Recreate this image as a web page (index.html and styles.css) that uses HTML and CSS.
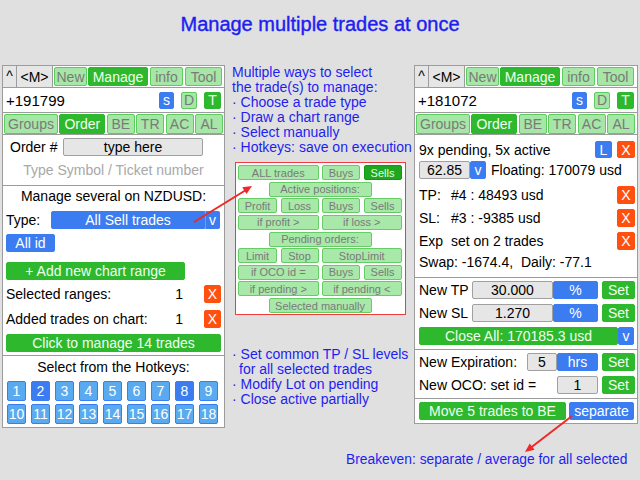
FILE: index.html
```html
<!DOCTYPE html>
<html>
<head>
<meta charset="utf-8">
<title>Manage multiple trades at once</title>
<link rel="stylesheet" href="styles.css">
</head>
<body>
<h1 class="title">Manage multiple trades at once</h1>
<div class="main">
  <div class="panel panel-left">
    <div class="row-a">
      <span class="cell caret">^</span>
      <span class="cell mcell">&lt;M&gt;</span>
      <span class="btn g w33 ml1">New</span>
      <span class="btn G w60 ml1">Manage</span>
      <span class="btn g w33 ml2">info</span>
      <span class="btn g w37 ml2">Tool</span>
    </div>
    <div class="row-b">
      <span class="balance">+191799</span>
      <span class="btn b sm w15 push">s</span>
      <span class="btn g sm w16 ml7">D</span>
      <span class="btn G sm w17 ml7">T</span>
    </div>
    <div class="row-c">
      <span class="btn g tab w54">Groups</span>
      <span class="btn G tab w46">Order</span>
      <span class="btn g tab w28">BE</span>
      <span class="btn g tab w28">TR</span>
      <span class="btn g tab w28">AC</span>
      <span class="btn g tab w28">AL</span>
    </div>
    <div class="sec-order">
      <div class="order-row">
        <span class="order-label">Order #</span>
        <span class="input w140">type here</span>
      </div>
      <div class="hint">Type Symbol / Ticket number</div>
    </div>
    <div class="sec-manage">
      <div class="center-title">Manage several on NZDUSD:</div>
      <div class="type-row">
        <span class="type-label">Type:</span>
        <span class="btn b sel w154">All Sell trades</span>
        <span class="btn b sel-v w15">v</span>
      </div>
      <div class="btn b h18 w49 mt5">All id</div>
      <div class="btn G h18 w179 mt10">+ Add new chart range</div>
      <div class="stat-row mt5">
        <span class="stat-label">Selected ranges:</span>
        <span class="stat-val">1</span>
        <span class="btn x h18 w17">X</span>
      </div>
      <div class="stat-row mt7">
        <span class="stat-label">Added trades on chart:</span>
        <span class="stat-val">1</span>
        <span class="btn x h18 w17">X</span>
      </div>
      <div class="btn G h18 w215 mt6">Click to manage 14 trades</div>
    </div>
    <div class="sec-hot">
      <div class="center-title hot-title">Select from the Hotkeys:</div>
      <div class="hot-grid">
        <span class="hk">1</span><span class="hk on">2</span><span class="hk">3</span>
        <span class="hk">4</span><span class="hk">5</span><span class="hk">6</span>
        <span class="hk">7</span><span class="hk on">8</span><span class="hk">9</span>
        <span class="hk">10</span><span class="hk">11</span><span class="hk">12</span>
        <span class="hk">13</span><span class="hk">14</span><span class="hk">15</span>
        <span class="hk">16</span><span class="hk">17</span><span class="hk">18</span>
      </div>
    </div>
  </div>

  <div class="mid">
    <div class="blue-text">
      <div>Multiple ways to select</div>
      <div>the trade(s) to manage:</div>
      <div>· Choose a trade type</div>
      <div>· Draw a chart range</div>
      <div>· Select manually</div>
      <div>· Hotkeys: save on execution</div>
    </div>
    <div class="sel-box">
      <div class="grid4">
        <span class="mb span2">ALL trades</span>
        <span class="mb">Buys</span>
        <span class="mb mb-on">Sells</span>
      </div>
      <div class="mrow-c"><span class="mb w103">Active positions:</span></div>
      <div class="grid4">
        <span class="mb">Profit</span>
        <span class="mb">Loss</span>
        <span class="mb">Buys</span>
        <span class="mb">Sells</span>
      </div>
      <div class="grid4">
        <span class="mb span2">if profit &gt;</span>
        <span class="mb span2">if loss &gt;</span>
      </div>
      <div class="mrow-c"><span class="mb w103">Pending orders:</span></div>
      <div class="grid4">
        <span class="mb">Limit</span>
        <span class="mb">Stop</span>
        <span class="mb span2">StopLimit</span>
      </div>
      <div class="grid4">
        <span class="mb span2">if OCO id =</span>
        <span class="mb">Buys</span>
        <span class="mb">Sells</span>
      </div>
      <div class="grid4">
        <span class="mb span2">if pending &gt;</span>
        <span class="mb span2">if pending &lt;</span>
      </div>
      <div class="mrow-c"><span class="mb w103">Selected manually</span></div>
    </div>
    <div class="blue-text lower">
      <div>· Set common TP / SL levels</div>
      <div class="indent">for all selected trades</div>
      <div>· Modify Lot on pending</div>
      <div>· Close active partially</div>
    </div>
  </div>

  <div class="panel panel-right">
    <div class="row-a">
      <span class="cell caret">^</span>
      <span class="cell mcell">&lt;M&gt;</span>
      <span class="btn g w33 ml1">New</span>
      <span class="btn G w60 ml1">Manage</span>
      <span class="btn g w33 ml2">info</span>
      <span class="btn g w37 ml2">Tool</span>
    </div>
    <div class="row-b">
      <span class="balance">+181072</span>
      <span class="btn b sm w15 push">s</span>
      <span class="btn g sm w16 ml7">D</span>
      <span class="btn G sm w17 ml7">T</span>
    </div>
    <div class="row-c">
      <span class="btn g tab w54">Groups</span>
      <span class="btn G tab w46">Order</span>
      <span class="btn g tab w28">BE</span>
      <span class="btn g tab w28">TR</span>
      <span class="btn g tab w28">AC</span>
      <span class="btn g tab w28">AL</span>
    </div>
    <div class="sec-info">
      <div class="r-row first">
        <span>9x pending, 5x active</span>
        <span class="btn b h17 w17 push">L</span>
        <span class="btn x h17 w18 ml5">X</span>
      </div>
      <div class="r-row mt3">
        <span class="input h18 w51">62.85</span>
        <span class="btn b h18 w16">v</span>
        <span class="floating">Floating: 170079 usd</span>
      </div>
      <div class="r-row mt7">
        <span class="r-label">TP:</span>
        <span>#4 : 48493 usd</span>
        <span class="btn x h18 w18 push">X</span>
      </div>
      <div class="r-row mt5">
        <span class="r-label">SL:</span>
        <span>#3 : -9385 usd</span>
        <span class="btn x h18 w18 push">X</span>
      </div>
      <div class="r-row mt5">
        <span class="r-label">Exp</span>
        <span>set on 2 trades</span>
        <span class="btn x h18 w18 push">X</span>
      </div>
      <div class="swap">Swap: -1674.4,&nbsp; Daily: -77.1</div>
    </div>
    <div class="sec-levels">
      <div class="r-row mt3">
        <span class="lvl-label">New TP</span>
        <span class="input h18 w81">30.000</span>
        <span class="btn b h18 w45">%</span>
        <span class="btn G h18 w33 ml4">Set</span>
      </div>
      <div class="r-row mt5">
        <span class="lvl-label">New SL</span>
        <span class="input h18 w81">1.270</span>
        <span class="btn b h18 w45">%</span>
        <span class="btn G h18 w33 ml4">Set</span>
      </div>
      <div class="r-row mt5">
        <span class="btn G h18 w199">Close All: 170185.3 usd</span>
        <span class="btn b h18 w16">v</span>
      </div>
    </div>
    <div class="sec-exp">
      <div class="r-row mt3">
        <span class="lvl-label">New Expiration:</span>
        <span class="input h18 w30">5</span>
        <span class="btn b h18 w41">hrs</span>
        <span class="btn G h18 w33 ml4">Set</span>
      </div>
      <div class="r-row mt5">
        <span class="lvl-label">New OCO: set id =</span>
        <span class="input h18 w41">1</span>
        <span class="btn G h18 w33 ml4">Set</span>
      </div>
    </div>
    <div class="sec-be">
      <div class="r-row mt3">
        <span class="btn G h18 w147">Move 5 trades to BE</span>
        <span class="btn b h18 w65 ml3">separate</span>
      </div>
    </div>
  </div>
</div>
<div class="footer">Breakeven: separate / average for all selected</div>

<svg class="arrows" width="640" height="480" viewBox="0 0 640 480">
  <line x1="194" y1="222" x2="246" y2="190" stroke="#f02828" stroke-width="2"/>
  <polygon points="252,186 246.5,194.1 242.2,187.3" fill="#f02828"/>
  <line x1="572" y1="416" x2="531" y2="447.5" stroke="#f02828" stroke-width="2"/>
  <polygon points="525,452 534.6,449.7 529.7,443.4" fill="#f02828"/>
</svg>
</body>
</html>
```
FILE: styles.css
```css
* { box-sizing: border-box; }
html, body { margin: 0; padding: 0; }
body {
  width: 640px;
  height: 480px;
  background: #e0e0e0;
  font-family: "Liberation Sans", Arial, sans-serif;
  font-size: 14px;
  color: #000;
  position: relative;
  overflow: hidden;
}
.title {
  margin: 0;
  height: 65px;
  padding-top: 12px;
  font-size: 20px;
  line-height: 24px;
  font-weight: normal;
  text-align: center;
  color: #1e1ef0;
  -webkit-text-stroke: 0.4px #1e1ef0;
}
.main { display: flex; align-items: flex-start; }

.panel { background: #fff; border: 1px solid #9c9c9c; width: 223px; }
.panel-left { margin-left: 2px; }
.panel-right { width: 224px; }

.row-a {
  display: flex; align-items: center;
  height: 22px; border-bottom: 1px solid #9c9c9c;
}
.cell {
  align-self: stretch;
  background: #e6e6e6;
  border-right: 1px solid #9c9c9c;
  display: flex; align-items: center; justify-content: center;
}
.caret { width: 14px; align-items: flex-start; padding-top: 2px; }
.mcell { width: 36px; }

.btn {
  display: flex; align-items: center; justify-content: center;
  height: 19px;
  border: 1px solid transparent;
  border-radius: 2px;
  white-space: nowrap;
  font-size: 14px;
  flex: none;
}
.g { background: #a6e6a6; border-color: #5ccc5c; color: #7a7a7a; }
.G { background: #2db82d; border-color: #2db82d; color: #f0fff0; }
.b { background: #3b7cf0; border-color: #3b7cf0; color: #fff; }
.x { background: #ff5010; border-color: #ff5010; color: #fff; }

.sm { height: 17px; }
.h17 { height: 17px; }
.h18 { height: 18px; }
.tab { height: 20px; }

.w15 { width: 15px; } .w16 { width: 16px; } .w17 { width: 17px; } .w18 { width: 18px; }
.w28 { width: 28px; } .w30 { width: 30px; } .w33 { width: 33px; } .w37 { width: 37px; }
.w41 { width: 41px; } .w45 { width: 45px; } .w46 { width: 46px; } .w49 { width: 49px; }
.w51 { width: 51px; } .w54 { width: 54px; } .w60 { width: 60px; } .w65 { width: 65px; }
.w81 { width: 81px; } .w140 { width: 140px; } .w147 { width: 147px; } .w154 { width: 154px; }
.w179 { width: 179px; } .w199 { width: 199px; } .w215 { width: 215px; }

.ml1 { margin-left: 1px; } .ml2 { margin-left: 2px; } .ml3 { margin-left: 3px; }
.ml4 { margin-left: 4px; } .ml5 { margin-left: 5px; } .ml7 { margin-left: 7px; }
.mt3 { margin-top: 3px; } .mt5 { margin-top: 5px; } .mt6 { margin-top: 6px; }
.mt7 { margin-top: 7px; } .mt10 { margin-top: 10px; }
.push { margin-left: auto; }

.row-b {
  display: flex; align-items: center;
  height: 25px; padding: 0 3px;
  border-bottom: 1px solid #9c9c9c;
}
.balance { font-size: 15px; }

.row-c {
  display: flex; align-items: center; gap: 1.4px;
  height: 22px; padding: 0 1px;
  border-bottom: 1px solid #9c9c9c;
}

.input {
  display: flex; align-items: center; justify-content: center;
  height: 18px;
  background: #e6e6e6;
  border: 1px solid #a0a0a0;
  border-radius: 2px;
  flex: none;
}

.sec-order {
  padding: 3px 0 7px;
  border-bottom: 1px solid #9c9c9c;
}
.order-row { display: flex; align-items: center; padding-left: 7px; }
.order-label { width: 53px; }
.hint { margin-top: 6px; line-height: 16px; text-align: center; color: #a8a8a8; }

.sec-manage {
  padding: 2px 3px 3px;
  border-bottom: 1px solid #9c9c9c;
}
.center-title { line-height: 16px; text-align: center; }
.type-row { display: flex; align-items: center; margin-top: 7px; }
.type-label { width: 45px; }
.sel { height: 18px; border-radius: 2px 0 0 2px; }
.sel-v { height: 18px; border-radius: 0 2px 2px 0; border-left-color: #6d9ff5; }
.stat-row { display: flex; align-items: center; height: 18px; }
.stat-label { flex: 1; }
.stat-val { margin-right: 21px; }

.sec-hot { padding: 3px 0 3px; }
.hot-grid {
  display: grid;
  grid-template-columns: repeat(9, 19px);
  column-gap: 5px;
  row-gap: 3px;
  padding-left: 4px;
  margin-top: 6px;
}
.hk {
  height: 20px;
  display: flex; align-items: center; justify-content: center;
  background: #5aaaf0;
  border: 1px solid #3b7cf0;
  border-radius: 2px;
  color: #fff;
  font-size: 14px;
}
.hk.on { background: #3b7cf0; }

.mid { width: 189px; padding-left: 7px; }
.blue-text { color: #1e1ef0; font-size: 14px; line-height: 15px; }
.blue-text .indent { padding-left: 7px; }
.lower { margin-top: 32px; }

.sel-box {
  margin-top: 7px;
  margin-left: 3px;
  width: 171px;
  height: 153px;
  background: #fff;
  border: 1px solid #f03c3c;
  padding: 2px 3px 0 2px;
  display: flex; flex-direction: column; gap: 1.625px;
}
.grid4 {
  display: grid;
  grid-template-columns: 39px 38px 38px 38px;
  column-gap: 3.5px;
}
.mrow-c { display: flex; justify-content: center; }
.mb {
  height: 15px;
  display: flex; align-items: center; justify-content: center;
  background: #a8e8a8;
  border: 1px solid #66cc66;
  border-radius: 2px;
  color: #7a7a7a;
  font-size: 11px;
  white-space: nowrap;
}
.mb-on { background: #1fa81f; border-color: #119911; color: #e0ffe0; }
.span2 { grid-column: span 2; }
.w103 { width: 103px; }

.sec-info {
  padding: 0 2px 7px 4px;
  border-bottom: 1px solid #9c9c9c;
}
.r-row { display: flex; align-items: center; height: 18px; }
.r-row.first { margin-top: 6px; height: 17px; }
.floating { margin-left: 5px; }
.r-label { width: 32px; }
.swap { margin-top: 4px; line-height: 16px; }

.sec-levels {
  padding: 0 2px 4px 4px;
  border-bottom: 1px solid #9c9c9c;
}
.lvl-label { flex: 1; }
.sec-exp {
  padding: 0 2px 4px 4px;
  border-bottom: 1px solid #9c9c9c;
}
.sec-be { padding: 0 2px 3px 4px; }

.footer {
  position: absolute;
  left: 346px;
  top: 452px;
  line-height: 16px;
  color: #1e1ef0;
  font-size: 13.8px;
}

.arrows { position: absolute; left: 0; top: 0; pointer-events: none; }
```
